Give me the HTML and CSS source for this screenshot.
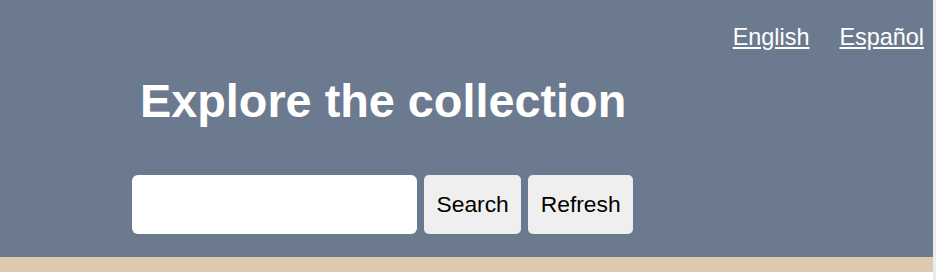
FILE: index.html
```html
<!DOCTYPE html>
<html lang="en">
<head>
<meta charset="UTF-8" />
<meta name="viewport" content="width=device-width, initial-scale=1" />
<title>Explore the collection</title>
<link rel="stylesheet" href="styles.css">
</head>
<body>
  <div class="page">
    <header class="masthead">
      <nav class="lang" aria-label="Language">
        <a href="#">English</a>
        <a href="#">Español</a>
      </nav>
      <div class="intro">
        <h1>Explore the collection</h1>
        <form class="search" role="search" onsubmit="return false;">
          <input type="text" class="search-input" aria-label="Search the collection" />
          <button type="submit">Search</button>
          <button type="button">Refresh</button>
        </form>
      </div>
    </header>
    <div class="band"></div>
  </div>
</body>
</html>
```

FILE: styles.css
```css
/* Base */
* {
  box-sizing: border-box;
}
body {
  margin: 0;
  background: #e9ebee;
  font-family: 'Liberation Sans', Arial, Helvetica, sans-serif;
  font-size: 23.4px;
}
.page {
  width: 933px;
  background: #fff;
  min-height: 280px;
}
.masthead {
  background: #6b7a8f;
  height: 257px;
  padding-top: 22px;
}
.lang {
  display: flex;
  justify-content: flex-end;
  gap: 30px;
  padding-right: 9px;
}
.lang a {
  color: #fff;
  line-height: 30px;
}
.intro {
  padding-left: 132px;
}
h1 {
  margin: 19px 0 0 8px;
  color: #fff;
  font-size: 2em;
  font-weight: 700;
  line-height: 60px;
}
.search {
  display: flex;
  gap: 7px;
  margin-top: 44px;
}
.search-input {
  width: 285px;
  height: 59px;
  border: none;
  border-radius: 6px;
  background: #fff;
  font: inherit;
  padding: 0 12px;
}
.search button {
  height: 59px;
  border: none;
  border-radius: 5px;
  background: #efefef;
  color: #000;
  font: inherit;
  font-size: 22.8px;
  padding: 0 12.5px;
  cursor: pointer;
}
.band {
  height: 15px;
  background: #dccaae;
}
```
